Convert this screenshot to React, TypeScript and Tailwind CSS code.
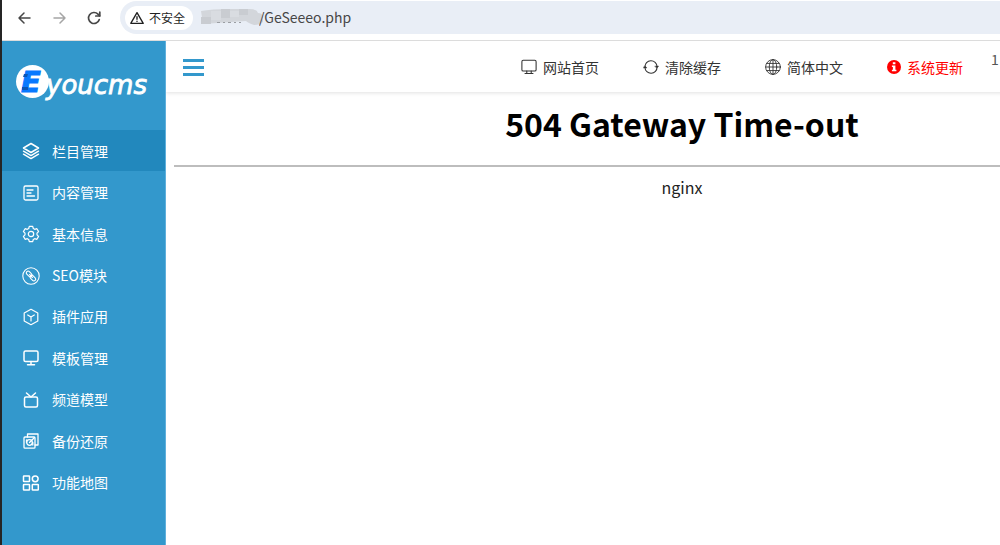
import type { ReactNode } from 'react'

function Icon({ size = 18, stroke = 1.5, children }: { size?: number; stroke?: number; children: ReactNode }) {
  return (
    <svg
      width={size}
      height={size}
      viewBox="0 0 18 18"
      fill="none"
      stroke="currentColor"
      strokeWidth={stroke}
      strokeLinecap="round"
      strokeLinejoin="round"
      className="shrink-0"
      aria-hidden="true"
    >
      {children}
    </svg>
  )
}

const menu: { label: string; icon: ReactNode }[] = [
  {
    label: '栏目管理',
    icon: (
      <Icon>
        <path d="M9 1.5 16.5 6 9 10.5 1.5 6Z" />
        <path d="M1.5 9.2 9 13.6l7.500-4.400M1.500 12.200 9 16.600l7.500-4.400" />
      </Icon>
    ),
  },
  {
    label: '内容管理',
    icon: (
      <Icon stroke={1.3}>
        <rect x="2" y="2" width="14" height="14" rx="1.5" />
        <path d="M5 6h6M5 9h4M5 12h7.500" />
      </Icon>
    ),
  },
  {
    label: '基本信息',
    icon: (
      <Icon stroke={1.2}>
        <path d="M7.300 1.300h3.400l.6 2.200 1.400.8 2.200-.6 1.700 2.900-1.600 1.600v1.600l1.600 1.600-1.700 2.900-2.200-.6-1.400.8-.6 2.200H7.300l-.6-2.200-1.400-.8-2.200.6-1.700-2.900L3 9.800V8.200L1.400 6.600l1.700-2.900 2.200.6 1.400-.8Z" />
        <circle cx="9" cy="9" r="2.700" />
      </Icon>
    ),
  },
  {
    label: 'SEO模块',
    icon: (
      <Icon stroke={1.1}>
        <circle cx="9" cy="9" r="8.200" />
        <rect x="3.900" y="5.100" width="6.400" height="3.600" rx="1.800" transform="rotate(45 7.100 6.900)" />
        <rect x="7.700" y="9.300" width="6.400" height="3.600" rx="1.800" transform="rotate(45 10.900 11.100)" />
        <path d="m7.600 7.500 2.800 3" />
      </Icon>
    ),
  },
  {
    label: '插件应用',
    icon: (
      <Icon stroke={1.2}>
        <path d="M9 1.300 15.800 5v8L9 16.700 2.200 13V5Z" />
        <path d="M5.700 7 9 9l3.300-2M9 9v4" />
      </Icon>
    ),
  },
  {
    label: '模板管理',
    icon: (
      <Icon>
        <rect x="2" y="2" width="14" height="10.500" rx="1.500" />
        <path d="M9 12.500V15.500M5.500 15.700h7" />
      </Icon>
    ),
  },
  {
    label: '频道模型',
    icon: (
      <Icon>
        <rect x="2.500" y="6" width="13" height="10" rx="1.500" />
        <path d="M4.500 2 9 6l4.500-4" />
      </Icon>
    ),
  },
  {
    label: '备份还原',
    icon: (
      <Icon stroke={1.3}>
        <rect x="2" y="5" width="11" height="11.200" rx="1" />
        <path d="M5.500 5V2H16v11h-3" />
        <circle cx="7.500" cy="10.500" r="2.800" />
        <path d="m7.500 10.500 5-5M4.500 8v2.500M10.800 13v-2.500" />
      </Icon>
    ),
  },
  {
    label: '功能地图',
    icon: (
      <Icon>
        <rect x="1.500" y="2" width="6" height="5.500" rx="0.500" />
        <circle cx="13.200" cy="4.800" r="2.900" />
        <rect x="1.500" y="10.500" width="6" height="5.500" rx="0.500" />
        <rect x="10.300" y="10.500" width="6" height="5.500" rx="0.500" />
      </Icon>
    ),
  },
]

const links: { label: string; icon: ReactNode; className: string }[] = [
  {
    label: '网站首页',
    className: 'flex items-center gap-[6px]',
    icon: (
      <Icon size={16} stroke={1.2}>
        <rect x="1" y="1.500" width="16" height="12" rx="1.500" />
        <path d="M6.500 13.500v2.500M11.500 13.500v2.500M4.500 16.300h9" />
      </Icon>
    ),
  },
  {
    label: '清除缓存',
    className: 'flex items-center gap-[6px]',
    icon: (
      <Icon size={16} stroke={1.2}>
        <path d="M2.200 9A6.800 6.800 0 0 1 15.800 8.500M15.800 9A6.800 6.800 0 0 1 2.200 9.500" />
        <path d="m13.600 8 4 0-1.900 2.200ZM.4 10h4L2.300 7.800Z" fill="currentColor" strokeWidth="0.500" />
      </Icon>
    ),
  },
  {
    label: '简体中文',
    className: 'flex items-center gap-[6px]',
    icon: (
      <Icon size={16} stroke={1}>
        <circle cx="9" cy="9" r="8.300" />
        <ellipse cx="9" cy="9" rx="4.200" ry="8.300" />
        <path d="M9 .7v16.600M.7 9h16.600M2 5h14M2 13h14" />
      </Icon>
    ),
  },
  {
    label: '系统更新',
    className: 'flex items-center gap-[6px] text-[#ff0000]',
    icon: (
      <svg width="14" height="14" viewBox="0 0 14 14" className="shrink-0" aria-hidden="true">
        <circle cx="7" cy="7" r="7" fill="currentColor" />
        <path d="M5.800 2.200h2.600v2H5.800ZM4.900 5.400h3.500v4.400h1v1.500H4.900V9.800h1V6.900h-1Z" fill="#fff" />
      </svg>
    ),
  },
]

function BrowserBar() {
  return (
    <div className="flex h-[41px] items-start border-b border-[#dcdcdc] bg-white pt-px pl-[13px] text-[#474747]">
      <div className="flex h-[33px] items-center gap-[17px]">
        <button type="button" aria-label="Back">
          <Icon>
            <path d="M15 9H4M9 4 4 9l5 5" />
          </Icon>
        </button>
        <button type="button" aria-label="Forward" className="text-[#a5a5a5]">
          <Icon>
            <path d="M4 9h11M10 4l5 5-5 5" />
          </Icon>
        </button>
        <button type="button" aria-label="Reload">
          <Icon stroke={1.7}>
            <path d="M14.300 10.500A5.500 5.500 0 1 1 13 5.200l1.600 1.600" />
            <path d="M14.800 3v4h-4" />
          </Icon>
        </button>
      </div>
      <div className="ml-[17px] flex h-[33px] min-w-0 flex-1 items-center rounded-l-full bg-[#e9eef6] pl-[5px]">
        <button
          type="button"
          className="flex h-6 shrink-0 items-center gap-1 rounded-full bg-white pr-2 pl-1 text-[12px] text-[#1f1f1f]"
        >
          <Icon size={16} stroke={1.5}>
            <path d="M9 3 16 15H2Z" />
            <path d="M9 7.500v3M9 12.600v.2" />
          </Icon>
          不安全
        </button>
        <svg width="62" height="20" viewBox="0 0 62 20" className="ml-2 shrink-0" aria-hidden="true">
          <path d="M0 3q10-2 30-2h18q8 0 9 4 4 0 5 3v6q-3 3-9 3-6-2-8-4l-43 3Z" fill="#d3d6db" />
          <path d="M0 9h10v7H0ZM20 1h9v9h-9ZM38 1h9v6h-9Z" fill="#c9ccd1" />
          <path d="M10 3h10v9H10ZM29 3h9v6h-9Z" fill="#d9dce1" />
          <path d="M16 14.500h3M22 14.500h2M27 14.500h3M33 14.500h2M38 14.500h2" stroke="#9b9ea3" />
        </svg>
        <input
          type="text"
          aria-label="Address"
          defaultValue="/GeSeeeo.php"
          className="-ml-1 min-w-0 flex-1 bg-transparent text-[14px] text-[#474747] outline-none"
        />
      </div>
    </div>
  )
}

function Logo() {
  return (
    <a href="#home" className="block h-[89px] pt-[22px] pl-[14px]" aria-label="Eyoucms">
      <svg width="136" height="38" viewBox="0 0 136 38">
        <circle cx="16.500" cy="18.500" r="16.500" fill="#fff" />
        <text
          x="5"
          y="29"
          fill="#0879ff"
          stroke="#0879ff"
          fontFamily="DejaVu Sans"
          fontSize="29"
          fontWeight="700"
          fontStyle="italic"
        >
          E
        </text>
        <path d="M8 11h4l-1 3H7ZM6 24h6v3H6Z" fill="#0a55b5" />
        <text
          x="30"
          y="31"
          fill="#fff"
          stroke="#fff"
          strokeWidth="0.800"
          fontFamily="DejaVu Sans"
          fontSize="26"
          fontStyle="italic"
        >
          youcms
        </text>
      </svg>
    </a>
  )
}

function Sidebar() {
  return (
    <aside className="w-[164px] shrink-0 border-r border-[#5fb0dc] bg-[#3398cc]">
      <Logo />
      <nav className="grid h-[373px] grid-rows-9 text-[14px] text-white">
        {menu.map((item, i) => (
          <a
            key={item.label}
            href="#menu"
            className={i === 0 ? 'flex items-center gap-3 bg-[#2288bd] pt-px pl-5' : 'flex items-center gap-3 pt-px pl-5'}
          >
            {item.icon}
            {item.label}
          </a>
        ))}
      </nav>
    </aside>
  )
}

function Header() {
  return (
    <header className="flex h-[51px] items-center bg-white pt-px pl-[17px] text-[14px] text-[#333] shadow-[0_1px_4px_rgba(0,0,0,0.12)]">
      <button type="button" aria-label="Toggle menu" className="grid w-[21px] gap-1">
        <span className="h-[3px] bg-[#3398cc]" />
        <span className="h-[3px] bg-[#3398cc]" />
        <span className="h-[3px] bg-[#3398cc]" />
      </button>
      <nav className="ml-auto flex items-center gap-11">
        {links.map((link) => (
          <a key={link.label} href="#link" className={link.className}>
            {link.icon}
            {link.label}
          </a>
        ))}
      </nav>
      <span className="h-9 w-[235px] pl-7 text-[#555]">1</span>
    </header>
  )
}

export default function App() {
  return (
    <div className="flex min-h-screen flex-col overflow-hidden border-l-2 border-[#252525] bg-white font-['Noto_Sans_CJK_SC',sans-serif]">
      <BrowserBar />
      <div className="flex flex-1">
        <Sidebar />
        {/* the admin panel is wider than the window and runs off the right edge */}
        <div className="min-w-0 flex-1 overflow-hidden">
          <div className="min-w-[1032px]">
            <Header />
            <main className="px-2 pt-2 text-center text-black">
              <h1 className="text-[32px] leading-[46px] font-bold">504 Gateway Time-out</h1>
              <hr className="mt-[19px] border-t-2 border-[#bdbdbd]" />
              <p className="mt-2 text-[16px] leading-6 text-[#222]">nginx</p>
            </main>
          </div>
        </div>
      </div>
    </div>
  )
}
